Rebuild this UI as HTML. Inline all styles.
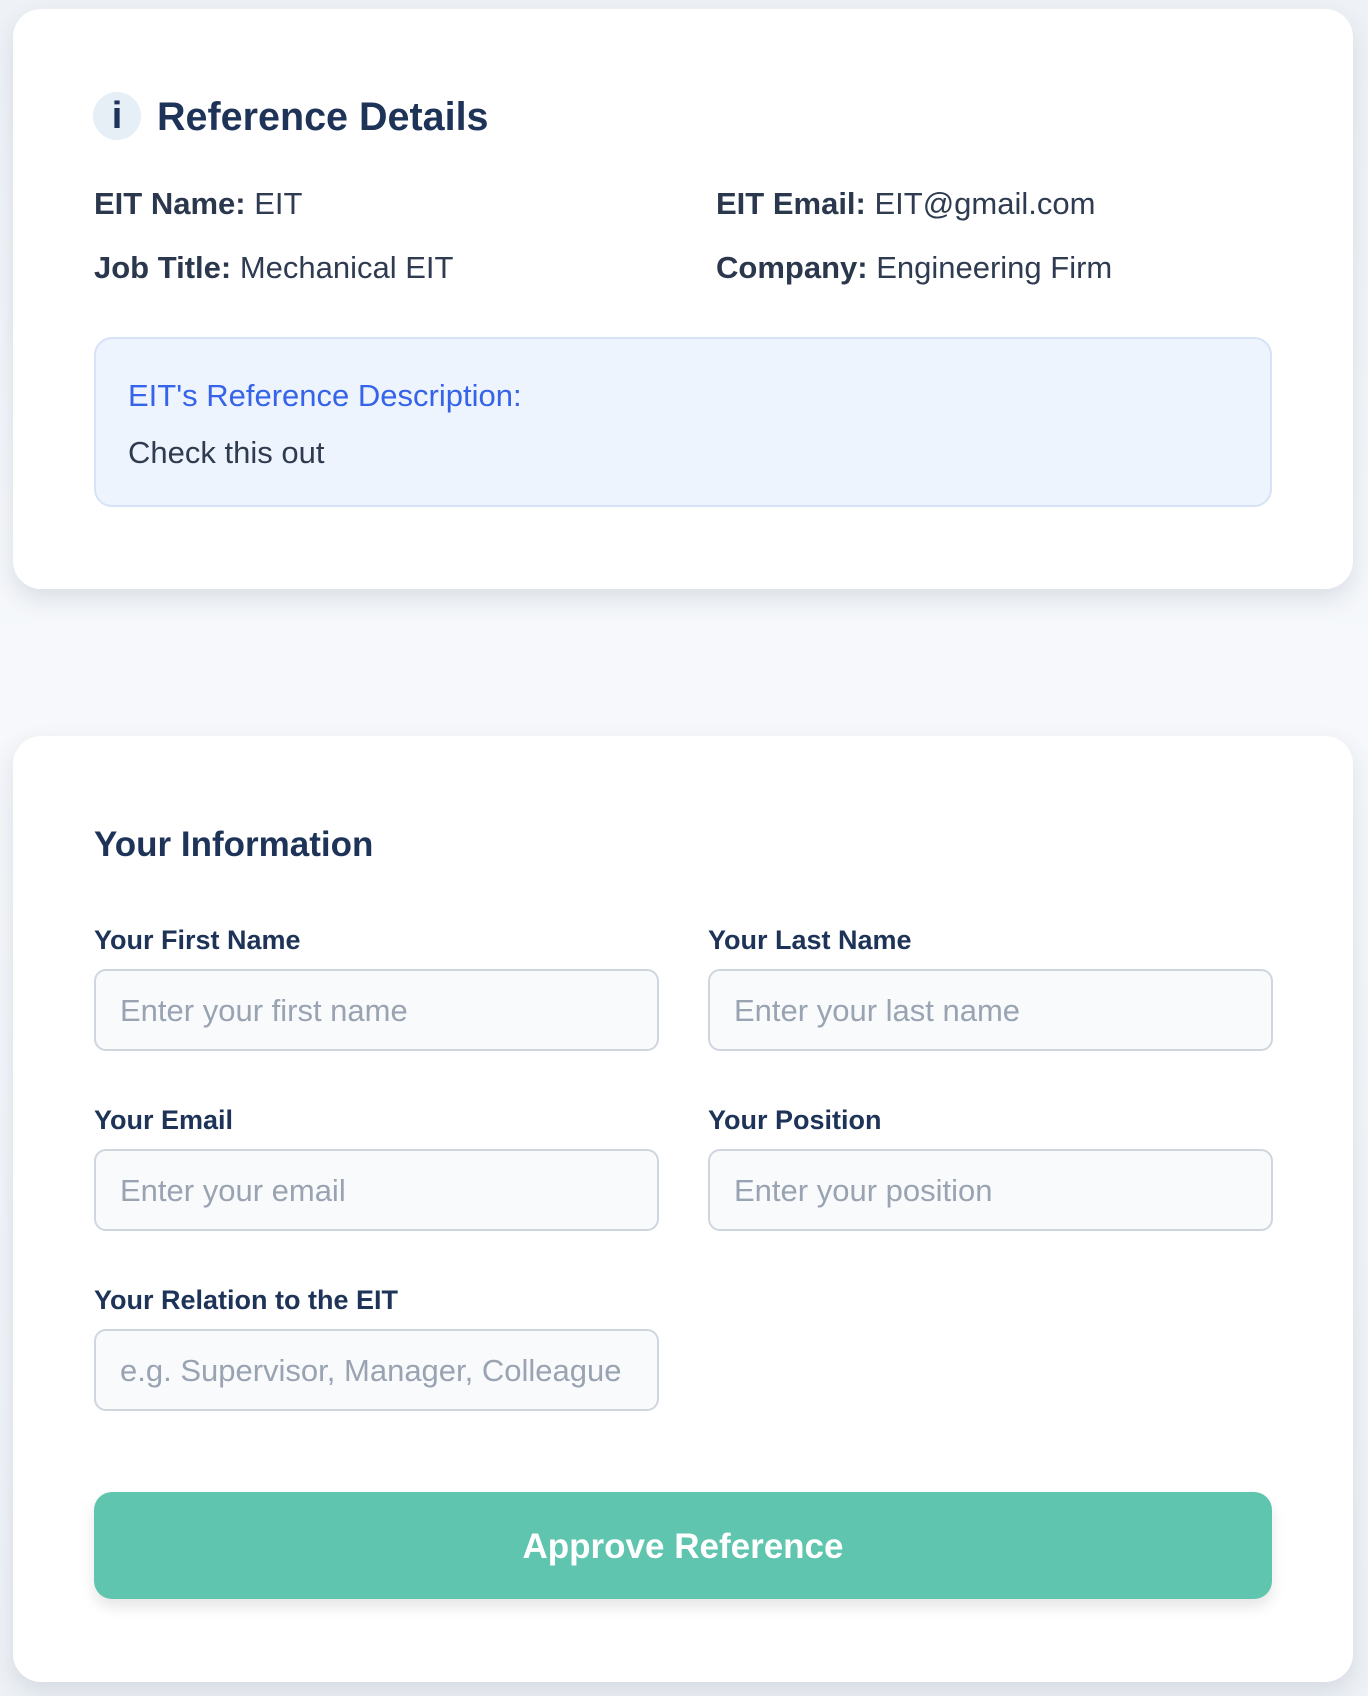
<!DOCTYPE html>
<html><head><style>
*{box-sizing:border-box;margin:0;padding:0}
body{width:1368px;height:1696px;background:linear-gradient(#eef2f6,#f6f8fb 40%,#eef2f6);font-family:"Liberation Sans",sans-serif;position:relative;overflow:hidden;color:#2d3a4f}
.card{position:absolute;left:13px;width:1340px;background:#fff;border-radius:28px;box-shadow:0 10px 24px rgba(30,50,80,.12)}
.abs{position:absolute;white-space:nowrap}
.row{font-size:31px;color:#2f3b50}
.row b{color:#2a374c;font-weight:bold}
.lbl{font-size:27px;color:#1e3358;font-weight:bold}
.inp{position:absolute;width:565px;height:82px;border:2px solid #cfd6e0;border-radius:12px;background:#f8fafc;font-size:31px;color:#9aa3b1;padding-left:24px;line-height:80px;white-space:nowrap;overflow:hidden}
</style></head><body>
<div class="card" style="top:9px;height:580px">
  <div class="abs" style="left:80px;top:83px;width:48px;height:48px;border-radius:50%;background:#e6eef6;color:#1e3358;font-size:38px;font-weight:bold;text-align:center;line-height:48px">i</div>
  <div class="abs" style="left:144px;top:86px;font-size:39.5px;font-weight:bold;color:#1e3358">Reference Details</div>
  <div class="abs row" style="left:81px;top:177px"><b>EIT Name:</b> EIT</div>
  <div class="abs row" style="left:703px;top:177px"><b>EIT Email:</b> EIT@gmail.com</div>
  <div class="abs row" style="left:81px;top:241px"><b>Job Title:</b> Mechanical EIT</div>
  <div class="abs row" style="left:703px;top:241px"><b>Company:</b> Engineering Firm</div>
  <div class="abs" style="left:81px;top:328px;width:1178px;height:170px;background:#eef4fd;border:2px solid #d6e3f7;border-radius:18px">
    <div class="abs" style="left:32px;top:39px;font-size:31px;color:#3563e9">EIT's Reference Description:</div>
    <div class="abs" style="left:32px;top:96px;font-size:31px;color:#2f3b50">Check this out</div>
  </div>
</div>
<div class="card" style="top:736px;height:946px">
  <div class="abs" style="left:81px;top:89px;font-size:35px;font-weight:bold;color:#1e3358">Your Information</div>
  <div class="abs lbl" style="left:81px;top:189px">Your First Name</div>
  <div class="abs lbl" style="left:695px;top:189px">Your Last Name</div>
  <div class="inp" style="left:81px;top:233px">Enter your first name</div>
  <div class="inp" style="left:695px;top:233px">Enter your last name</div>
  <div class="abs lbl" style="left:81px;top:369px">Your Email</div>
  <div class="abs lbl" style="left:695px;top:369px">Your Position</div>
  <div class="inp" style="left:81px;top:413px">Enter your email</div>
  <div class="inp" style="left:695px;top:413px">Enter your position</div>
  <div class="abs lbl" style="left:81px;top:549px">Your Relation to the EIT</div>
  <div class="inp" style="left:81px;top:593px;padding-right:24px;text-overflow:clip">e.g. Supervisor, Manager, Colleague</div>
  <div class="abs" style="left:81px;top:756px;width:1178px;height:107px;border-radius:18px;background:#5fc5ae;box-shadow:0 8px 14px rgba(0,0,0,.1);color:#fff;font-size:35px;font-weight:bold;text-align:center;line-height:109px">Approve Reference</div>
</div>
</body></html>
